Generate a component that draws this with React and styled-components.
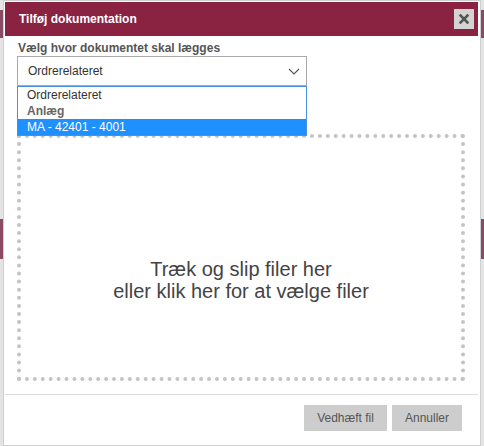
import React from 'react'
import styled, { createGlobalStyle } from 'styled-components'

const GlobalStyle = createGlobalStyle`
    html, body {
        margin: 0;
        padding: 0;
    }
    body {
        width: 484px;
        height: 446px;
        overflow: hidden;
        font-family: "Liberation Sans", Arial, sans-serif;
        background: linear-gradient(
            to bottom,
            #e4e4e4 0px, #e4e4e4 10px,
            #8a4a63 10px, #8a4a63 38px,
            #e4e4e4 38px, #e4e4e4 219px,
            #8a4a63 219px, #8a4a63 259px,
            #e4e4e4 259px
        );
    }
`

const Modal = styled.div`
    box-sizing: border-box;
    width: 478px;
    height: 446px;
    margin-left: 3px;
    padding: 1px 2px 0 1px;
    background: #fff;
    border: 1px solid #cfcfcf;
    display: flex;
    flex-direction: column;
`

const Header = styled.div`
    height: 34px;
    flex-shrink: 0;
    background: #8a2342;
    display: flex;
    align-items: center;
    justify-content: space-between;
    padding: 0 4px 0 14px;
`

const Title = styled.h1`
    margin: 0;
    color: #fff;
    font-size: 12px;
    font-weight: bold;
`

const CloseButton = styled.button`
    width: 20px;
    height: 20px;
    padding: 0;
    border: none;
    background: #d3d3d3;
    display: flex;
    align-items: center;
    justify-content: center;
    cursor: pointer;
`

const Body = styled.div`
    padding: 5px 12px 0 12px;
`

const Label = styled.label`
    display: block;
    padding-left: 1px;
    margin-bottom: 1px;
    font-size: 12px;
    line-height: 14px;
    font-weight: bold;
    color: #555;
`

const SelectWrap = styled.div`
    position: relative;
    width: 290px;
`

const SelectBox = styled.div`
    box-sizing: border-box;
    height: 30px;
    border: 1px solid #a9a9a9;
    padding: 0 6px 0 10px;
    display: flex;
    align-items: center;
    justify-content: space-between;
    font-size: 12px;
    color: #333;
`

const OptionList = styled.ul`
    position: absolute;
    top: 100%;
    left: 0;
    box-sizing: border-box;
    width: 290px;
    margin: 0;
    padding: 0;
    list-style: none;
    background: #fff;
    border: 1px solid #4a90e2;
    z-index: 2;
`

const Option = styled.li`
    height: 16px;
    line-height: 16px;
    padding-left: 9px;
    font-size: 12px;
    font-weight: ${p => (p.group ? 'bold' : 'normal')};
    color: ${p => (p.selected ? '#fff' : p.group ? '#666' : '#333')};
    background: ${p => (p.selected ? '#1e90ff' : 'transparent')};
`

const DropZone = styled.div`
    box-sizing: border-box;
    width: 448px;
    height: 247px;
    margin-top: 48px;
    border: 4px dotted #c4c4c4;
    display: flex;
    flex-direction: column;
    align-items: center;
    padding-top: 120px;
    font-size: 20px;
    line-height: 22px;
    color: #444;
    text-align: center;
`

const Footer = styled.div`
    margin-top: 13px;
    border-top: 1px solid #dcdcdc;
    padding: 10px 16px 0 0;
    display: flex;
    justify-content: flex-end;
    gap: 5px;
`

const Button = styled.button`
    height: 26px;
    min-width: ${p => p.w}px;
    padding: 0 12px;
    border: none;
    background: #cdcdcd;
    color: #555;
    font-family: "Liberation Sans", Arial, sans-serif;
    font-size: 12px;
    cursor: pointer;
`

export default function App() {
    return (
        <>
            <GlobalStyle />
            <Modal>
                <Header>
                    <Title>Tilføj dokumentation</Title>
                    <CloseButton aria-label="Luk">
                        <svg width="10" height="10" viewBox="0 0 10 10">
                            <path d="M1.5 1.5 L8.5 8.5 M8.5 1.5 L1.5 8.5" stroke="#555" strokeWidth="2.6" strokeLinecap="square" />
                        </svg>
                    </CloseButton>
                </Header>
                <Body>
                    <Label>Vælg hvor dokumentet skal lægges</Label>
                    <SelectWrap>
                        <SelectBox>
                            <span>Ordrerelateret</span>
                            <svg width="12" height="7" viewBox="0 0 12 7">
                                <path d="M1 1 L6 6 L11 1" fill="none" stroke="#555" strokeWidth="1.1" />
                            </svg>
                        </SelectBox>
                        <OptionList>
                            <Option>Ordrerelateret</Option>
                            <Option group>Anlæg</Option>
                            <Option selected>MA - 42401 - 4001</Option>
                        </OptionList>
                    </SelectWrap>
                    <DropZone>
                        <span>Træk og slip filer her</span>
                        <span>eller klik her for at vælge filer</span>
                    </DropZone>
                </Body>
                <Footer>
                    <Button w={83}>Vedhæft fil</Button>
                    <Button w={70}>Annuller</Button>
                </Footer>
            </Modal>
        </>
    )
}
